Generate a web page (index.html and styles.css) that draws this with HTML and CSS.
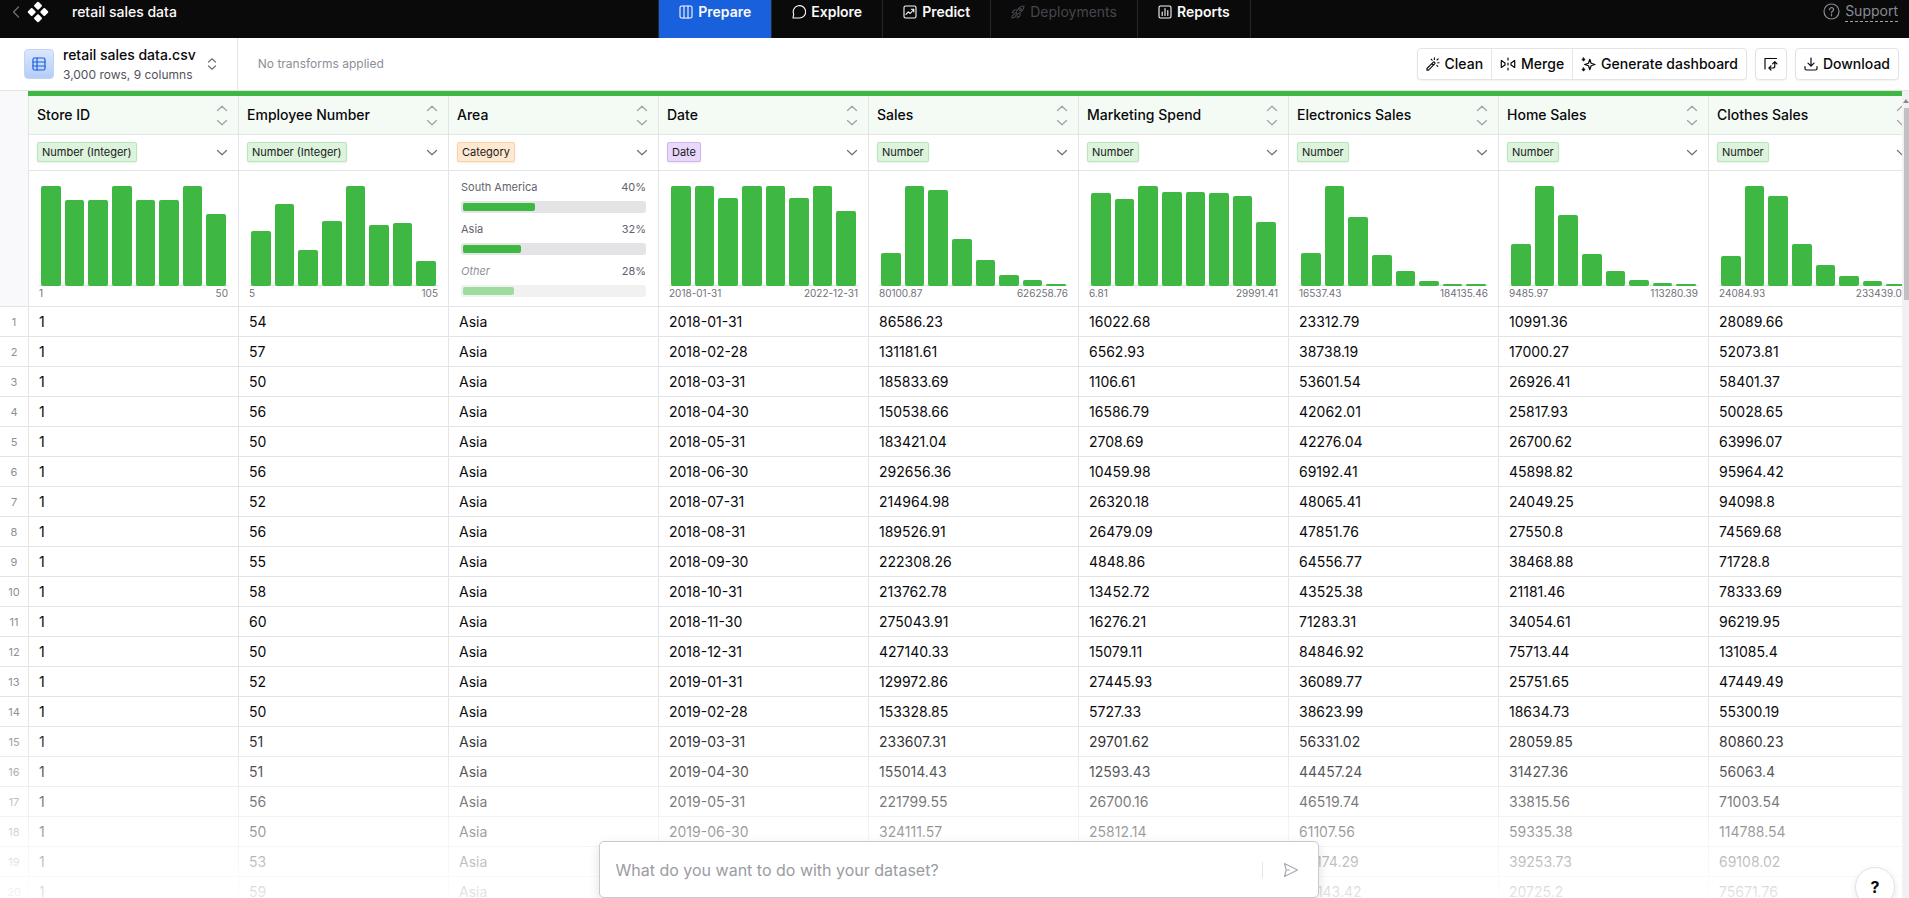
FILE: index.html
```html
<!DOCTYPE html>
<html lang="en">
<head>
<meta charset="utf-8">
<meta name="viewport" content="width=device-width, initial-scale=1">
<title>retail sales data</title>
<link rel="stylesheet" href="styles.css">
</head>
<body>
<svg class="sprite" aria-hidden="true">
  <symbol id="i-up" viewBox="0 0 12 7"><path d="M1.5 5.5 6 1.2l4.500 4.300"/></symbol>
  <symbol id="i-down" viewBox="0 0 12 7"><path d="M1.500 1.500 6 5.800l4.500-4.300"/></symbol>
</svg>
<header class="topbar">
  <div class="brand">
    <a class="back" href="#" aria-label="Back"><svg width="8" height="12" viewBox="0 0 8 12"><path d="M6.500 1 1.500 6l5 5"/></svg></a>
    <svg class="logo" width="22" height="22" viewBox="0 0 22 22"><g><rect x="7.900" y="1.600" width="6.200" height="6.200" rx="1" transform="rotate(45 11 4.700)"/><rect x="1.600" y="7.900" width="6.200" height="6.200" rx="1" transform="rotate(45 4.700 11)"/><rect x="14.200" y="7.900" width="6.200" height="6.200" rx="1" transform="rotate(45 17.300 11)"/><rect x="7.900" y="14.200" width="6.200" height="6.200" rx="1" transform="rotate(45 11 17.300)"/></g></svg>
    <h1 class="project">retail sales data</h1>
  </div>
  <nav class="tabs">
    <a class="tab tab-active" href="#"><svg width="14" height="14" viewBox="0 0 14 14"><rect x="1" y="1" width="12" height="12" rx="1.500"/><path d="M5 1v12M9 1v12"/></svg>Prepare</a>
    <a class="tab" href="#"><svg width="14" height="14" viewBox="0 0 14 14"><path d="M1 13l.7-3.800A6.200 6.200 0 1 1 7 13Z"/></svg>Explore</a>
    <a class="tab" href="#"><svg width="14" height="14" viewBox="0 0 14 14"><rect x="1" y="1" width="12" height="12" rx="1.500"/><path d="M3 9.300 5.300 6.800l1.900 1.700 3.500-4M8.200 4.300h2.600v2.600"/></svg>Predict</a>
    <a class="tab tab-off" aria-disabled="true"><svg width="14" height="14" viewBox="0 0 14 14"><path d="M5 8.300C6 4.500 8.500 1.300 13 1c-.2 4.500-3.500 7-7.300 8.200ZM5.500 5H3L1.300 7.500l3.200.7M9 8.700V11l-2.500 1.800-.7-3.300M3.500 9.500C1.500 9.600 1 11 1 13c2 0 3.500-.5 3.600-2.500"/><circle cx="9.500" cy="4.500" r="1"/></svg>Deployments</a>
    <a class="tab" href="#"><svg width="14" height="14" viewBox="0 0 14 14"><rect x="1" y="1" width="12" height="12" rx="1.500"/><path d="M4.200 10.500V7M7 10.500v-7M9.800 10.500V5.500"/></svg>Reports</a>
  </nav>
  <a class="support" href="#"><svg width="17" height="17" viewBox="0 0 17 17"><circle cx="8.500" cy="8.500" r="7.500"/><path d="M6.400 6.600c.2-2.700 4.300-2.600 4.200 0C10.500 8 8.500 8.100 8.500 9.900M8.500 11.600v1.200"/></svg><span>Support</span></a>
</header>

<section class="toolbar">
  <button class="dataset" type="button">
    <span class="dataset-icon"><svg width="14" height="14" viewBox="0 0 14 14"><rect x="1" y="1" width="12" height="12" rx="1.500"/><path d="M1 5h12M1 9h12M5 1v12"/></svg></span>
    <span class="dataset-text"><span class="dataset-name">retail sales data.csv</span><span class="dataset-meta">3,000 rows, 9 columns</span></span>
    <svg width="10" height="12" viewBox="0 0 10 12"><path d="M1.500 4 5 .8 8.500 4M1.500 8 5 11.200 8.500 8"/></svg>
  </button>
  <p class="transforms">No transforms applied</p>
  <div class="actions">
    <div class="group">
      <button type="button"><svg width="14" height="14" viewBox="0 0 15 15"><path d="m1 12.300 6.600-6.600a1.100 1.100 0 0 1 1.700 1.700L2.700 14H1ZM6.300 7l1.700 1.700"/><path d="M9 1v1.600M5.600 2.400l1 1M13 2l-1.200 1.200M12.500 6.200H14M11.600 9l1 1"/></svg>Clean</button>
      <button type="button"><svg width="16" height="14" viewBox="0 0 16 14"><path d="M1.300 3.500v7L5 8V6ZM14.700 3.500v7L11 8V6Z"/><path d="M8 1v12" stroke-dasharray="2 3"/></svg>Merge</button>
      <button type="button"><svg width="15" height="15" viewBox="0 0 15 15"><path d="M8.800 2.300 10.100 6.200 14 7.500 10.100 8.800 8.800 12.700 7.500 8.800 3.600 7.500 7.500 6.200Z"/><path class="dot" d="M2.500.8 3.100 1.900 4.200 2.500 3.100 3.100 2.500 4.200 1.900 3.100.8 2.500 1.900 1.900ZM2.500 10.800l.6 1.100 1.100.6-1.100.6-.6 1.100-.6-1.100-1.100-.6 1.100-.6Z"/></svg>Generate dashboard</button>
    </div>
    <button class="btn btn-icon" type="button" aria-label="Refresh source"><svg width="16" height="16" viewBox="0 0 16 16"><path d="M2 13V2.500h11.500M6 12h3.800a2 2 0 0 0 2-2V6M9.600 7.800l2.200-2.200L14 7.800M8 9.900 5.900 12 8 14.100"/></svg></button>
    <button class="btn" type="button"><svg width="14" height="14" viewBox="0 0 14 14"><path d="M1 9.500V11.500a1.500 1.500 0 0 0 1.500 1.500h9a1.500 1.500 0 0 0 1.500-1.500V9.500M7 1v8M4 6.200l3 3 3-3"/></svg>Download</button>
  </div>
</section>

<main class="workspace">
  <div class="sheet">
    <div class="accent"></div>
    <table class="grid">
      <thead>
        <tr class="names"><th class="gutter" rowspan="3"></th></tr>
        <tr class="types"></tr>
        <tr class="charts"></tr>
      </thead>
      <tbody></tbody>
    </table>
    <div class="fade"></div>
  </div>
  <div class="scroll"><span class="scroll-arrow"></span><span class="scroll-thumb"></span></div>
</main>

<form class="prompt">
  <input type="text" aria-label="Ask about your dataset" placeholder="What do you want to do with your dataset?">
  <button type="submit" aria-label="Send"><svg width="16" height="16" viewBox="0 0 16 16"><path d="M1.500 1.500 14.500 8l-13 6.500L3.200 8ZM3.200 8h3.300"/></svg></button>
</form>
<button class="help" type="button" aria-label="Help">?</button>
<script src="app.js"></script>
</body>
</html>
```
FILE: styles.css
```css
* { box-sizing: border-box; }
body {
  margin: 0;
  height: 100vh;
  overflow: hidden;
  display: flex;
  flex-direction: column;
  background: #fff;
  color: #09090b;
  font: 400 14px/20px Inter, "Liberation Sans", sans-serif;
}
button, input { font: inherit; color: inherit; margin: 0; }
button { cursor: pointer; }
a { color: inherit; text-decoration: none; }
svg { flex: none; fill: none; stroke: currentColor; stroke-width: 1.2; stroke-linecap: round; stroke-linejoin: round; }
.sprite { display: none; }

.topbar {
  display: grid;
  grid-template-columns: 1fr auto 1fr;
  height: 38px;
  flex: none;
  background: #0a0a0a;
  color: #fafafa;
}
.brand { display: flex; align-items: center; height: 24px; padding-left: 12px; }
.back { display: flex; color: #71717a; margin-right: 7px; }
.logo { stroke: none; fill: #fff; margin-right: 23px; }
.project { margin: 0; font-size: 14px; line-height: 20px; font-weight: 500; }
.tabs { display: flex; border-left: 1px solid #27272a; }
.tab {
  display: flex;
  align-items: center;
  gap: 5px;
  padding: 0 20px 14px;
  border-right: 1px solid #27272a;
  font-weight: 600;
}
.tab svg { stroke-width: 1.1; }
.tab-active { background: #1860dc; }
.tab-off { color: #46464d; font-weight: 400; }
.support {
  justify-self: end;
  display: flex;
  align-items: flex-start;
  gap: 5px;
  padding: 1px 11px 0 0;
  color: #8b8b94;
}
.support svg { margin-top: 2px; }
.support span { border-bottom: 1px dashed #a1a1aa; }

.toolbar {
  display: flex;
  align-items: center;
  flex: none;
  height: 53px;
  border-bottom: 1px solid #e4e4e7;
}
.dataset {
  display: flex;
  align-items: center;
  align-self: stretch;
  gap: 9px;
  padding: 0 20px 0 24px;
  border: 0;
  border-right: 1px solid #e4e4e7;
  background: none;
  text-align: left;
}
.dataset > svg { color: #71717a; margin-left: 2px; }
.dataset-icon {
  display: grid;
  place-items: center;
  width: 30px;
  height: 30px;
  border: 1px solid #c3d3f2;
  border-radius: 4px;
  background: linear-gradient(#dbe7fc, #b4cdf8);
  color: #1860dc;
}
.dataset-text { display: flex; flex-direction: column; padding-top: 2px; }
.dataset-name { font-weight: 500; line-height: 20px; }
.dataset-meta { font-size: 12px; line-height: 20px; color: #52525b; }
.transforms { margin: 0 auto 0 20px; font-size: 12px; color: #8e8e97; }
.actions { display: flex; align-items: center; gap: 8px; padding-right: 10px; }
.group, .btn {
  display: flex;
  height: 32px;
  border: 1px solid #e4e4e7;
  border-radius: 4px;
  background: #fff;
  box-shadow: 0 1px 2px rgba(0, 0, 0, .06);
}
.btn, .group button { align-items: center; gap: 5px; padding: 0 8px; font-weight: 500; }
.group button { display: flex; border: 0; background: none; border-right: 1px solid #e4e4e7; }
.group button:last-child { border-right: 0; }
.dot { fill: currentColor; stroke-width: .8; }
.btn-icon { padding: 0 7px; }

.workspace { display: flex; flex: 1; min-height: 0; }
.sheet { position: relative; flex: 1; min-width: 0; overflow: hidden; }
.accent { height: 5px; border-left: 28px solid #f9f9fb; background: #3eb842; }
.grid { width: 1918px; table-layout: fixed; border-collapse: separate; border-spacing: 0; }
.grid th, .grid td { padding: 0; border: 0 solid #e4e4e7; border-width: 0 0 1px 1px; text-align: left; font-weight: 400; }
.grid .gutter { width: 28px; border-left: 0; background: #f9f9fb; }
.names th:not(.gutter) { width: 210px; height: 39px; padding: 0 8px; background: #f4fbf5; font-weight: 500; }
.grid .types td { height: 36px; padding: 7px 8px 0; vertical-align: top; }
.grid .charts td { height: 136px; vertical-align: top; }
.between { display: flex; align-items: center; justify-content: space-between; }
.sort, .menu { display: flex; flex-direction: column; gap: 7px; width: 16px; align-items: center; padding: 0; border: 0; background: none; color: #a1a1aa; }
.menu { color: #71717a; }
.tag { padding: 0 4px; border: 1px solid; border-radius: 2px; font-size: 11px; line-height: 18px; color: #18181b; box-shadow: 0 1px 2px rgba(0, 0, 0, .08); }
.tag-number { background: #dcf3dc; border-color: #b9e6ba; }
.tag-category { background: #ffe8d0; border-color: #fdd0a2; }
.tag-date { background: #e9d8fa; border-color: #d3b2f3; }
.hist { padding: 15px 10px 0; }
.bars { display: flex; align-items: flex-end; gap: 4px; height: 100px; padding: 0 2px; box-shadow: inset 0 -1px #cfeccf; }
.bars span { flex: 1; border-radius: 2px; background: #3eb842; }
.range { display: flex; justify-content: space-between; font-size: 10px; line-height: 15px; color: #71717a; }
.shares { display: grid; gap: 7px; padding: 7px 12px 0; font-size: 11px; line-height: 18px; color: #63636b; }
.meter { height: 12px; margin-top: 5px; padding: 2px; border-radius: 3px; background: #e4e4e7; }
.meter span { display: block; height: 8px; border-radius: 2px; background: #3eb842; }
.other .meter { opacity: .5; }
.other em { color: #8e8e97; }
.grid tbody td { height: 30px; padding: 0 10px; }
.grid tbody th { text-align: center; font-size: 11px; color: #8e8e97; border-left: 0; }
.fade { position: absolute; inset: auto 0 0; height: 190px; background: linear-gradient(rgba(255, 255, 255, 0), rgba(255, 255, 255, .9)); pointer-events: none; }
.scroll { display: flex; flex-direction: column; align-items: center; width: 7px; background: #f1f1f1; }
.scroll-arrow { margin: 8px 0 5px; border: 3px solid transparent; border-top: 0; border-bottom: 4px solid #8a8a8a; }
.scroll-thumb { width: 5px; height: 192px; margin-left: 2px; background: #c1c1c1; }

.prompt {
  position: absolute;
  left: 8px;
  right: 0;
  bottom: 0;
  margin: 0 auto;
  display: flex;
  align-items: center;
  width: 720px;
  height: 57px;
  padding: 0 16px;
  border: 1px solid #c9c9ce;
  border-radius: 5px;
  background: #fff;
  box-shadow: 0 4px 12px rgba(0, 0, 0, .12);
}
.prompt input { flex: 1; border: 0; outline: 0; padding: 0; background: none; font-size: 16px; }
.prompt input::placeholder { color: #9b9ba3; opacity: 1; }
.prompt button { display: flex; padding: 0 3px 0 20px; border: 0; border-left: 1px solid #e4e4e7; background: none; color: #a9a9b2; }
.help {
  position: absolute;
  right: 14px;
  bottom: -9px;
  width: 40px;
  height: 40px;
  padding: 0;
  border: 1px solid #e4e4e7;
  border-radius: 50%;
  background: #fff;
  font-size: 16px;
  font-weight: 700;
  box-shadow: 0 2px 6px rgba(0, 0, 0, .1);
}
```
FILE: app.js
```js
const columns = [
  { name: "Store ID", type: "Number (Integer)", bars: [100, 86, 86, 100, 86, 86, 100, 72], min: "1", max: "50" },
  { name: "Employee Number", type: "Number (Integer)", bars: [55, 82, 36, 65, 100, 61, 63, 25], min: "5", max: "105" },
  { name: "Area", type: "Category", shares: [["South America", 40], ["Asia", 32], ["Other", 28]] },
  { name: "Date", type: "Date", bars: [100, 100, 88, 100, 100, 88, 100, 75], min: "2018-01-31", max: "2022-12-31" },
  { name: "Sales", type: "Number", bars: [33, 100, 96, 47, 26, 11, 6, 2], min: "80100.87", max: "626258.76" },
  { name: "Marketing Spend", type: "Number", bars: [93, 87, 100, 94, 94, 93, 90, 64], min: "6.81", max: "29991.41" },
  { name: "Electronics Sales", type: "Number", bars: [33, 100, 69, 31, 15, 5, 2, 2], min: "16537.43", max: "184135.46" },
  { name: "Home Sales", type: "Number", bars: [42, 100, 71, 32, 15, 6, 3, 2], min: "9485.97", max: "113280.39" },
  { name: "Clothes Sales", type: "Number", bars: [30, 100, 90, 42, 21, 10, 5, 2], min: "24084.93", max: "233439.03" }
];

const rows = `1 54 Asia 2018-01-31 86586.23 16022.68 23312.79 10991.36 28089.66
1 57 Asia 2018-02-28 131181.61 6562.93 38738.19 17000.27 52073.81
1 50 Asia 2018-03-31 185833.69 1106.61 53601.54 26926.41 58401.37
1 56 Asia 2018-04-30 150538.66 16586.79 42062.01 25817.93 50028.65
1 50 Asia 2018-05-31 183421.04 2708.69 42276.04 26700.62 63996.07
1 56 Asia 2018-06-30 292656.36 10459.98 69192.41 45898.82 95964.42
1 52 Asia 2018-07-31 214964.98 26320.18 48065.41 24049.25 94098.8
1 56 Asia 2018-08-31 189526.91 26479.09 47851.76 27550.8 74569.68
1 55 Asia 2018-09-30 222308.26 4848.86 64556.77 38468.88 71728.8
1 58 Asia 2018-10-31 213762.78 13452.72 43525.38 21181.46 78333.69
1 60 Asia 2018-11-30 275043.91 16276.21 71283.31 34054.61 96219.95
1 50 Asia 2018-12-31 427140.33 15079.11 84846.92 75713.44 131085.4
1 52 Asia 2019-01-31 129972.86 27445.93 36089.77 25751.65 47449.49
1 50 Asia 2019-02-28 153328.85 5727.33 38623.99 18634.73 55300.19
1 51 Asia 2019-03-31 233607.31 29701.62 56331.02 28059.85 80860.23
1 51 Asia 2019-04-30 155014.43 12593.43 44457.24 31427.36 56063.4
1 56 Asia 2019-05-31 221799.55 26700.16 46519.74 33815.56 71003.54
1 50 Asia 2019-06-30 324111.57 25812.14 61107.56 59335.38 114788.54
1 53 Asia 2019-07-31 208310.42 18204.77 55174.29 39253.73 69108.02
1 59 Asia 2019-08-31 164920.18 21377.05 40143.42 20725.2 75671.76`.split("\n").map(line => line.split(" "));

const arrow = dir => `<svg width="12" height="7"><use href="#i-${dir}"/></svg>`;

const histogram = c => `<div class="hist">
  <div class="bars">${c.bars.map(h => `<span style="height:${h}%"></span>`).join("")}</div>
  <div class="range"><span>${c.min}</span><span>${c.max}</span></div></div>`;

const shares = c => `<div class="shares">${c.shares.map(([label, pct]) => {
  const other = label === "Other";
  return `<div class="${other ? "other" : ""}"><div class="between">${other ? `<em>${label}</em>` : `<span>${label}</span>`}<span>${pct}%</span></div>
  <div class="meter"><span style="width:${pct}%"></span></div></div>`;
}).join("")}</div>`;

const put = (selector, html) => document.querySelector(selector).insertAdjacentHTML("beforeend", html);

put(".names", columns.map(c => `<th scope="col"><div class="between">${c.name}<button class="sort" type="button" aria-label="Sort by ${c.name}">${arrow("up")}${arrow("down")}</button></div></th>`).join(""));
put(".types", columns.map(c => `<td><div class="between"><span class="tag tag-${c.type.split(" ")[0].toLowerCase()}">${c.type}</span><button class="menu" type="button" aria-label="Change type of ${c.name}">${arrow("down")}</button></div></td>`).join(""));
put(".charts", columns.map(c => `<td>${c.shares ? shares(c) : histogram(c)}</td>`).join(""));
put(".grid tbody", rows.map((r, i) => `<tr><th scope="row">${i + 1}</th>${r.map(v => `<td>${v}</td>`).join("")}</tr>`).join(""));
```
